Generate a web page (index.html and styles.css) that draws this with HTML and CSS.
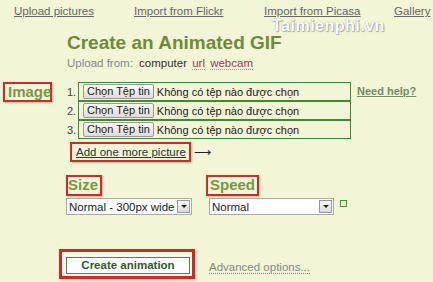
FILE: index.html
```html
<!DOCTYPE html>
<html lang="vi">
<head>
  <meta charset="UTF-8">
  <title>Create an Animated GIF</title>
  <link rel="stylesheet" href="styles.css">
</head>
<body>

<div class="nav">
  <span class="tab"><a href="#">Upload pictures</a></span>
  <span class="tab"><a href="#">Import from Flickr</a></span>
  <span class="tab"><a href="#">Import from Picasa</a></span>
  <span><a href="#">Gallery</a></span>
  <span class="mark">Taimienphi.vn</span>
</div>

<div class="head">
  <h1>Create an Animated GIF</h1>
  <div class="from">Upload from: <b>computer</b> <a href="#">url</a> <a href="#">webcam</a></div>
</div>

<div class="images">
  <div class="label boxed">Image</div>
  <div class="list">
    <div class="row"><span class="num">1.</span><div class="file"><span class="pick">Chọn Tệp tin</span>Không có tệp nào được chọn</div></div>
    <div class="row"><span class="num">2.</span><div class="file"><span class="pick">Chọn Tệp tin</span>Không có tệp nào được chọn</div></div>
    <div class="row"><span class="num">3.</span><div class="file"><span class="pick">Chọn Tệp tin</span>Không có tệp nào được chọn</div></div>
    <div class="more"><a href="#" class="boxed">Add one more picture</a><span class="arrow">&#10230;</span></div>
  </div>
  <a href="#" class="help">Need help?</a>
</div>

<div class="options">
  <div class="opt">
    <div class="label boxed">Size</div>
    <div class="select size"><span>Normal - 300px wide</span><i></i></div>
  </div>
  <div class="opt">
    <div class="label boxed">Speed</div>
    <div class="select speed"><span>Normal</span><i></i></div>
  </div>
  <span class="tick"></span>
</div>

<div class="actions">
  <div class="boxed go"><button>Create animation</button></div>
  <a href="#" class="adv">Advanced options...</a>
</div>

</body>
</html>
```

FILE: styles.css
```css
body {
  font-family: "Liberation Sans", Arial, sans-serif;
  margin: 0;
  background: #f2f5d6;
  color: #333;
  width: 433px;
  height: 282px;
  overflow: hidden;
}
.nav {
  position: relative;
  display: flex;
  padding: 5px 0 0 14px;
  font-size: 11.5px;
}
.nav .tab {
  width: 120px;
}
.nav .tab + .tab {
  width: 130px;
}
.nav a {
  color: #666;
}
.mark {
  position: absolute;
  left: 272px;
  top: 19px;
  font-size: 16px;
  font-weight: bold;
  line-height: 14px;
  color: #fff;
  letter-spacing: 0.5px;
  text-shadow: 0 0 1px #888, 1px 1px 1px #aaa;
}
.head {
  padding: 15px 0 0 67px;
}
h1 {
  margin: 0;
  font-size: 19px;
  color: #6f8a3a;
  line-height: 22px;
}
.from {
  font-size: 11.5px;
  color: #888;
  margin-top: 3px;
}
.from b {
  font-weight: normal;
  color: #333;
  margin-left: 3px;
}
.from a {
  color: #9b3b5e;
  text-decoration: none;
  border-bottom: 1px dotted #c08aa0;
  margin-left: 2px;
}
.boxed {
  border: 2px solid #cc2b2b;
  box-shadow: 1px 1px 2px rgba(0, 0, 0, 0.25);
}
.label {
  font-weight: bold;
  font-size: 15px;
  color: #7c9648;
  line-height: 16px;
  padding: 0 3px;
}
.images {
  display: flex;
  align-items: flex-start;
  margin-top: 13px;
  padding-left: 3px;
}
.images > .label {
  width: 39px;
}
.list {
  margin-left: 15px;
}
.row {
  display: flex;
  align-items: center;
  font-size: 11px;
}
.num {
  width: 11px;
  color: #444;
}
.file {
  width: 271px;
  height: 17px;
  border: 1px solid #3f8a32;
  display: flex;
  align-items: center;
  color: #222;
  font-size: 11px;
}
.pick {
  margin: 0 3px 0 4px;
  padding: 0 3px;
  height: 13px;
  line-height: 13px;
  border: 1px solid #999;
  border-radius: 2px;
  background: linear-gradient(#fafafa, #dcdcdc);
  color: #222;
}
.more {
  display: flex;
  align-items: center;
  margin: 3px 0 0 3px;
}
.more a {
  font-size: 11.5px;
  color: #333;
  padding: 2px 3px 2px 4px;
}
.arrow {
  margin-left: 3px;
  font-size: 12px;
  color: #222;
}
.help {
  margin: 3px 0 0 6px;
  font-size: 11px;
  font-weight: bold;
  color: #7a8867;
}
.options {
  display: flex;
  align-items: flex-end;
  margin-top: 13px;
  padding-left: 66px;
}
.opt {
  display: flex;
  flex-direction: column;
  align-items: flex-start;
  margin-right: 17px;
}
.opt .label {
  padding: 0 2px 1px 0;
  margin-bottom: 2px;
}
.opt + .opt {
  margin-right: 6px;
}
.opt + .opt .label {
  padding: 0 2px 1px 2px;
  margin-left: -3px;
}
.select {
  display: flex;
  align-items: center;
  justify-content: space-between;
  height: 15px;
  border: 1px solid #aaa;
  background: #fff;
  font-size: 11.5px;
  color: #222;
  padding-left: 2px;
}
.select.size {
  width: 122px;
}
.select.speed {
  width: 121px;
}
.select i {
  width: 11px;
  height: 11px;
  margin-right: 1px;
  border: 1px solid #999;
  background: linear-gradient(#f8f8f8, #dadada);
  position: relative;
}
.select i::after {
  content: "";
  position: absolute;
  left: 3px;
  top: 4px;
  border: 3px solid transparent;
  border-top: 3px solid #222;
  border-bottom: 0;
}
.tick {
  width: 5px;
  height: 5px;
  border: 1px solid #3f9a32;
  margin: 0 0 8px 0;
  align-self: flex-end;
}
.actions {
  display: flex;
  align-items: center;
  margin-top: 34px;
  padding-left: 59px;
}
.go {
  border-width: 3px;
  padding: 3px 2px 2px 4px;
  background: #f7f9ea;
}
.go button {
  width: 124px;
  height: 17px;
  border: 1px solid #4a8a3a;
  background: #fff;
  font-family: "Liberation Sans", Arial, sans-serif;
  font-weight: bold;
  font-size: 11.5px;
  color: #2f5a2a;
  padding: 0;
}
.adv {
  margin: 7px 0 0 14px;
  font-size: 11.5px;
  color: #888;
  text-decoration: none;
  border-bottom: 1px dotted #888;
}
```
